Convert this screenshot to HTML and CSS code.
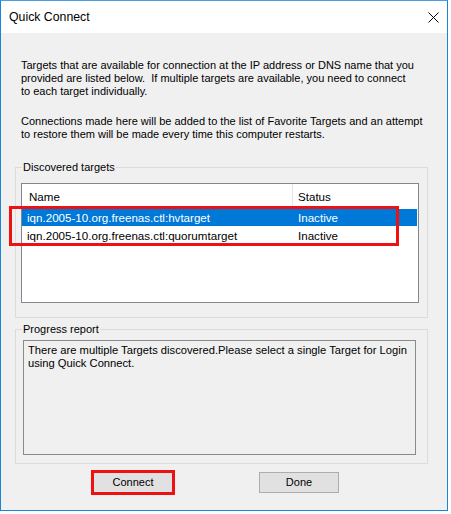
FILE: index.html
```html
<!DOCTYPE html>
<html>
<head>
<meta charset="utf-8">
<link rel="stylesheet" href="styles.css">
</head>
<body>
<div class="window">
  <div class="titlebar">
    <span class="title">Quick Connect</span>
    <svg class="close" width="11" height="11" viewBox="0 0 11 11"><path d="M0.5 0.5 L10.5 10.5 M10.5 0.5 L0.5 10.5" stroke="#000" stroke-width="1" fill="none"/></svg>
  </div>
  <div class="client">
    <p class="para p1">Targets that are available for connection at the IP address or DNS name that you<br>provided are listed below.&nbsp; If multiple targets are available, you need to connect<br>to each target individually.</p>
    <p class="para p2">Connections made here will be added to the list of Favorite Targets and an attempt<br>to restore them will be made every time this computer restarts.</p>

    <div class="group g1">
      <div class="glabel">Discovered targets</div>
      <div class="list">
        <div class="lhead">
          <div class="hcol hname">Name</div>
          <div class="hcol hstatus">Status</div>
        </div>
        <div class="row selected">
          <div class="cname">iqn.2005-10.org.freenas.ctl:hvtarget</div>
          <div class="cstatus">Inactive</div>
        </div>
        <div class="row second">
          <div class="cname">iqn.2005-10.org.freenas.ctl:quorumtarget</div>
          <div class="cstatus">Inactive</div>
        </div>
      </div>
    </div>

    <div class="group g2">
      <div class="glabel">Progress report</div>
      <div class="report">There are multiple Targets discovered.Please select a single Target for Login<br>using Quick Connect.</div>
    </div>

    <div class="buttons">
      <div class="btn btn-connect">Connect</div>
      <div class="btn btn-done">Done</div>
    </div>
  </div>
  <div class="annot"></div>
</div>
</body>
</html>
```
FILE: styles.css
```css
* { box-sizing: border-box; }
html, body { margin: 0; padding: 0; background: #ffffff; }
body {
  font-family: "Liberation Sans", Arial, sans-serif;
  font-size: 11px;
  color: #000;
}
.window {
  position: relative;
  width: 448px;
  height: 511px;
  border: 1px solid #1a84d6;
  border-top-color: #4a9de0;
  background: #f0f0f0;
  display: flex;
  flex-direction: column;
}
.titlebar {
  height: 32px;
  background: #ffffff;
  display: flex;
  align-items: center;
  justify-content: space-between;
  padding-left: 8px;
  flex: none;
}
.title {
  font-size: 12.3px;
  line-height: 16px;
  margin-top: 0px;
}
.close {
  margin-right: 8px;
  margin-top: 0px;
}
.client {
  flex: 1;
  display: flex;
  flex-direction: column;
}
.para {
  margin: 0;
  line-height: 13px;
  margin-left: 20px;
}
.p1 { margin-top: 26px; }
.p2 { margin-top: 17px; }
.group {
  border: 1px solid #dcdcdc;
  margin-left: 14px;
  width: 413px;
  display: flex;
  flex-direction: column;
}
.g1 { margin-top: 26px; height: 151px; }
.g2 { margin-top: 11px; height: 135px; }
.glabel {
  align-self: flex-start;
  margin-top: -7px;
  margin-left: 6px;
  padding: 0 1px;
  line-height: 13px;
  background: #f0f0f0;
}
.list {
  margin-top: 9px;
  margin-left: 5px;
  width: 398px;
  height: 120px;
  border: 1px solid #828790;
  background: #ffffff;
  font-size: 11.6px;
}
.lhead {
  display: flex;
  height: 25px;
}
.hcol {
  padding-top: 6px;
  line-height: 13px;
}
.hname {
  width: 271px;
  padding-left: 7px;
  border-right: 1px solid #e5e5e5;
}
.hstatus { padding-left: 5px; }
.row {
  display: flex;
  height: 17px;
  line-height: 17px;
  width: 395px;
}
.row.second {
  margin-top: 1px;
}
.row.selected {
  background: #0078d7;
  color: #ffffff;
}
.cname {
  width: 271px;
  padding-left: 5px;
}
.cstatus { padding-left: 5px; }
.report {
  margin-top: 4px;
  margin-left: 7px;
  width: 393px;
  height: 115px;
  border: 1px solid #8a8a8a;
  padding: 3px 0 0 4px;
  line-height: 13px;
  font-size: 11.2px;
}
.buttons {
  display: flex;
  margin-top: 8px;
  margin-left: 92px;
  gap: 86px;
}
.btn {
  width: 80px;
  height: 21px;
  background: #e1e1e1;
  border: 1px solid #adadad;
  text-align: center;
  line-height: 19px;
}
.btn-connect {
  outline: 3px solid #ee1111;
  outline-offset: -1px;
}
.annot {
  position: absolute;
  left: 8px;
  top: 205px;
  width: 390px;
  height: 40px;
  border: 3px solid #ee1111;
}
```
